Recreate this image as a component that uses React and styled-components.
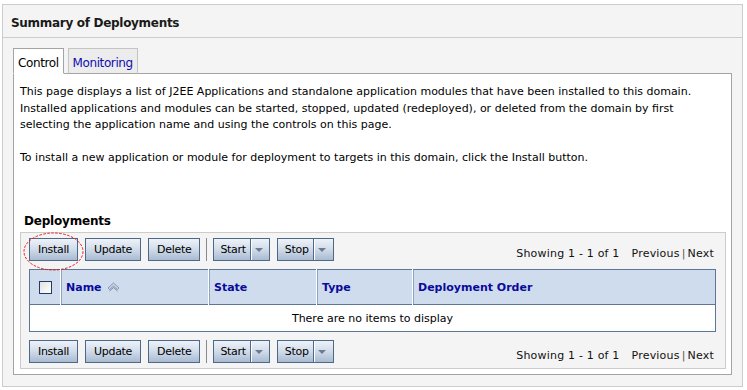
import React from 'react';
import styled, { createGlobalStyle } from 'styled-components';

const GlobalStyle = createGlobalStyle`
  body {
    margin: 0;
    background: #fff;
    font-family: "DejaVu Sans", Tahoma, sans-serif;
    font-size: 11px;
    color: #000;
  }
`;

const Page = styled.div`
  padding: 4px 0 0 2px;
`;

const Panel = styled.div`
  width: 739px;
  height: 381px;
  border: 1px solid #cccccc;
  background: #f4f4f4;
  display: flex;
  flex-direction: column;
`;

const PanelHeader = styled.div`
  box-sizing: border-box;
  height: 37px;
  border-bottom: 1px solid #cccccc;
  display: flex;
  align-items: center;
  padding: 3px 0 0 8px;
  font-size: 12px;
  font-weight: bold;
  letter-spacing: -0.3px;
  color: #1a1a1a;
`;

const PanelBody = styled.div`
  flex: 1;
  display: flex;
  flex-direction: column;
  padding: 10px 10px 11px 10px;
`;

const TabBar = styled.div`
  display: flex;
  align-items: flex-end;
  gap: 4px;
  margin-bottom: -1px;
  position: relative;
  z-index: 1;
`;

const Tab = styled.div`
  box-sizing: border-box;
  height: 26px;
  padding: 3px 4px 0;
  display: flex;
  align-items: center;
  font-size: 12px;
  letter-spacing: -0.4px;
  border: 1px solid ${({ $active }) => ($active ? '#a4a4a4' : '#c4c4c4')};
  border-bottom: 1px solid ${({ $active }) => ($active ? '#ffffff' : '#a4a4a4')};
  background: ${({ $active }) => ($active ? '#ffffff' : '#ececec')};
  color: ${({ $active }) => ($active ? '#000' : '#0c0cb0')};
`;

const ContentBox = styled.div`
  flex: 1;
  background: #fff;
  border: 1px solid #a4a4a4;
  padding: 10px 5px 5px 6px;
  display: flex;
  flex-direction: column;
`;

const Paragraph = styled.p`
  margin: 0 0 16.5px 0;
  line-height: 16.5px;
  white-space: nowrap;
`;

const SectionTitle = styled.div`
  margin-top: 30px;
  font-size: 12px;
  font-weight: bold;
  letter-spacing: -0.2px;
  line-height: 16px;
  padding-left: 4px;
`;

const Frame = styled.div`
  margin-top: 3px;
  border: 1px solid #cccccc;
  background: #f4f4f4;
  padding: 5px 9px 5px 8px;
  display: flex;
  flex-direction: column;
  gap: 8px;
`;

const Toolbar = styled.div`
  display: flex;
  align-items: center;
  justify-content: space-between;
`;

const ButtonGroup = styled.div`
  display: flex;
  align-items: center;
  gap: 7px;
`;

const Button = styled.button`
  position: relative;
  height: 23px;
  box-sizing: border-box;
  padding: 0 ${({ $pad }) => $pad || 8}px;
  border: 1px solid #4f6888;
  background: linear-gradient(#edf2f8 0%, #d3deeb 45%, #a9bbd2 100%);
  font-family: "DejaVu Sans", Tahoma, sans-serif;
  font-size: 11px;
  letter-spacing: -0.3px;
  color: #000;
  display: flex;
  align-items: center;
  cursor: pointer;
`;

const DropPart = styled.span`
  display: flex;
  align-items: center;
  height: 100%;
  margin-left: 4px;
  padding-left: 3px;
  border-left: 1px solid #4f6888;
  box-shadow: inset 1px 0 0 #ffffff;
`;

const Caret = styled.span`
  width: 0;
  height: 0;
  border-left: 4px solid transparent;
  border-right: 4px solid transparent;
  border-top: 4px solid #6b7c91;
  margin-left: 1px;
`;

const Divider = styled.span`
  width: 1px;
  height: 23px;
  background: #8a8a8a;
  margin: 0 -1px;
`;

const Ellipse = styled.svg`
  position: absolute;
  left: -7px;
  top: -7px;
  pointer-events: none;
  overflow: visible;
`;

const Paging = styled.div`
  font-size: 11px;
  letter-spacing: 0.2px;
  padding-right: 2px;
  padding-top: 8px;
  color: #111;

  .gap { margin-left: 12px; }
  .bar { margin: 0 2px; color: #555; }
`;

const Table = styled.table`
  width: 100%;
  border-collapse: collapse;
  border: 1px solid #5c7598;
  background: #fff;
`;

const HeadCell = styled.th`
  height: 34px;
  background: #cfdcee;
  text-align: ${({ $center }) => ($center ? 'center' : 'left')};
  padding: 0 5px;
  width: ${({ $w }) => ($w ? `${$w}px` : 'auto')};
  font-size: 11px;
  font-weight: bold;
  color: #0a0a9a;
  border-left: 1px solid #ffffff;
  box-shadow: inset 1px 0 0 #8ea3bf;
  &:first-child { border-left: none; box-shadow: none; }
`;

const Check = styled.span`
  display: inline-block;
  width: 11px;
  height: 11px;
  border: 1px solid #1d3c68;
  background: linear-gradient(135deg, #e2e2dc, #ffffff);
  vertical-align: middle;
`;

const SortIcon = styled.svg`
  margin-left: 5px;
  vertical-align: -1px;
`;

const EmptyCell = styled.td`
  height: 24px;
  text-align: center;
  font-size: 11px;
  border-top: 1px solid #5c7598;
`;

function Toolbox({ highlight }) {
  return (
    <Toolbar>
      <ButtonGroup>
        <Button>
          Install
          {highlight && (
            <Ellipse width="62" height="40" viewBox="0 0 62 40">
              <ellipse cx="30.5" cy="19.5" rx="29.5" ry="18.5" fill="none" stroke="#ee1111" strokeWidth="1" strokeDasharray="2.5 1.5" />
            </Ellipse>
          )}
        </Button>
        <Button>Update</Button>
        <Button>Delete</Button>
        <Divider />
        <Button $pad={6}>
          Start
          <DropPart><Caret /></DropPart>
        </Button>
        <Button $pad={7}>
          Stop
          <DropPart><Caret /></DropPart>
        </Button>
      </ButtonGroup>
      <Paging>
        Showing 1 - 1 of 1<span className="gap">Previous</span><span className="bar">|</span>Next
      </Paging>
    </Toolbar>
  );
}

export default function App() {
  return (
    <Page>
      <GlobalStyle />
      <Panel>
        <PanelHeader>Summary of Deployments</PanelHeader>
        <PanelBody>
          <TabBar>
            <Tab $active>Control</Tab>
            <Tab>Monitoring</Tab>
          </TabBar>
          <ContentBox>
            <Paragraph>
              This page displays a list of J2EE Applications and standalone application modules that have been installed to this domain.
              <br />
              Installed applications and modules can be started, stopped, updated (redeployed), or deleted from the domain by first
              <br />
              selecting the application name and using the controls on this page.
            </Paragraph>
            <Paragraph>
              To install a new application or module for deployment to targets in this domain, click the Install button.
            </Paragraph>
            <SectionTitle>Deployments</SectionTitle>
            <Frame>
              <Toolbox highlight />
              <Table>
                <thead>
                  <tr>
                    <HeadCell $center $w={20}><Check /></HeadCell>
                    <HeadCell $w={137}>
                      Name
                      <SortIcon width="13" height="10" viewBox="0 0 13 10">
                        <path d="M1 6 L6.5 1 L12 6 L10.5 7.5 L6.5 4 L2.5 7.5 Z" fill="#c9d4e4" stroke="#7489a8" strokeWidth="0.8" />
                        <path d="M2.5 9 L6.5 5.5 L10.5 9" fill="none" stroke="#7489a8" strokeWidth="1" />
                      </SortIcon>
                    </HeadCell>
                    <HeadCell $w={97}>State</HeadCell>
                    <HeadCell $w={85}>Type</HeadCell>
                    <HeadCell>Deployment Order</HeadCell>
                  </tr>
                </thead>
                <tbody>
                  <tr>
                    <EmptyCell colSpan={5}>There are no items to display</EmptyCell>
                  </tr>
                </tbody>
              </Table>
              <Toolbox />
            </Frame>
          </ContentBox>
        </PanelBody>
      </Panel>
    </Page>
  );
}
